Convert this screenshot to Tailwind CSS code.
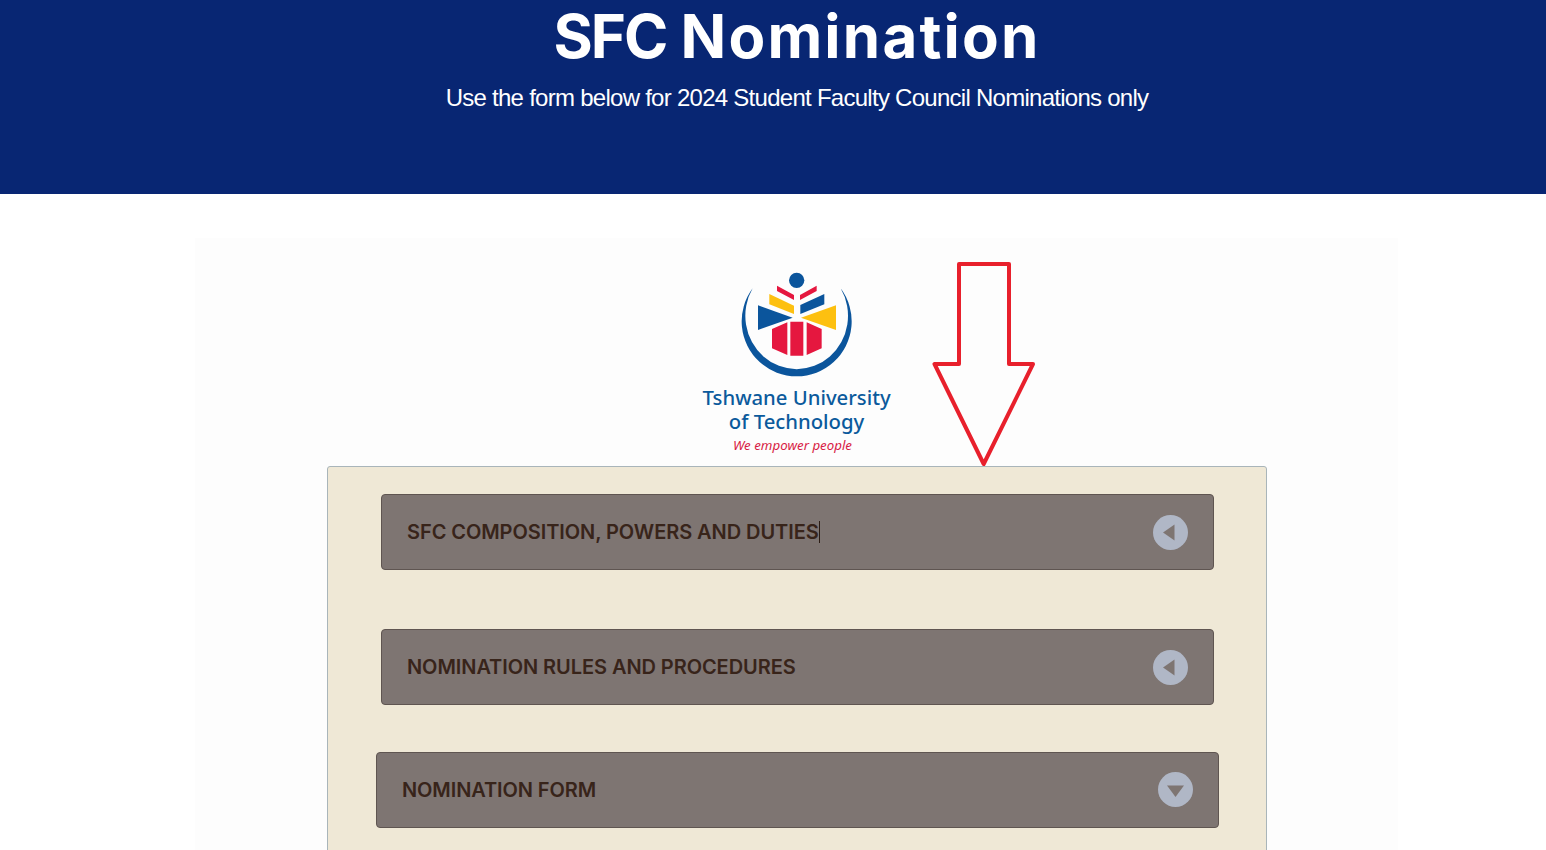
<!doctype html>
<html lang="en">
<head>
<meta charset="utf-8">
<title>SFC Nomination</title>
<script src="https://cdn.jsdelivr.net/npm/@tailwindcss/browser@4"></script>
</head>
<body class="bg-white h-[850px] overflow-hidden font-['Inter',sans-serif]">
<header class="h-[194px] bg-[#082673] pl-[48px] text-white text-center">
  <h1 class="pt-[2px] text-[60px] leading-[68px] font-bold font-['Inter',sans-serif]"><span class="tracking-[-2px]">SFC</span> <span class="tracking-[2.2px]">Nomination</span></h1>
  <p class="mt-[14px] text-[24px] leading-[28px] tracking-[-0.73px] font-['Liberation_Sans',sans-serif]">Use the form below for 2024 Student Faculty Council Nominations only</p>
</header>
<main class="relative mt-[44px] ml-[195px] w-[1203px] h-[612px] bg-[#fdfdfd]">
  <div class="flex flex-col items-center pt-[27px] h-[228px]">
    <svg class="w-[130px] h-[115px] shrink-0 mr-[4px]" viewBox="0 0 390 345" aria-label="Tshwane University of Technology logo">
      <circle cx="200" cy="46" r="23" fill="#0b559c"/>
      <path d="M68 70A165 165 0 1 0 332 70A154 160 0 1 1 68 70Z" fill="#0b559c"/>
      <path d="M141 62L192 90V105L141 78Z M260 62L210 90V105L260 78Z" fill="#e5173f"/>
      <path d="M118 87L192 122V147L118 118Z" fill="#fdc010"/>
      <path d="M283 87L211 120V147L283 118Z" fill="#0b559c"/>
      <path d="M84 121L188 158L84 195Z" fill="#0b559c"/>
      <path d="M318 121L213 158L318 195Z" fill="#fdc010"/>
      <path d="M181 170H220V272H181Z M126 192L172 172V270L126 250Z M275 192L230 172V270L275 250Z" fill="#e5173f"/>
    </svg>
    <div class="mt-[5px] text-center text-[#0b5a9c] text-[20.3px] leading-[24px] font-medium font-['Noto_Sans',sans-serif]">
      <div>Tshwane University</div>
      <div>of Technology</div>
    </div>
    <div class="mt-[2px] pr-[8px] text-[13.3px] leading-[20px] italic text-[#d81c45] font-['Noto_Sans',sans-serif]">We empower people</div>
  </div>
  <svg class="absolute left-[735px] top-[22px] w-[110px] h-[210px]" viewBox="930 260 110 210" fill="none">
    <path d="M959 264H1009V364H1033L983.7 464L934.5 364H959Z" stroke="#e8202c" stroke-width="4" stroke-linejoin="round"/>
  </svg>
  <section class="ml-[132px] w-[940px] h-[390px] bg-[#efe8d6] border border-[#a9b5ba] rounded-t-[3px] pt-[27px]">
    <div class="ml-[53px] w-[833px] h-[76px] flex items-center justify-between pl-[25px] pr-[25px] bg-[#7e7572] border border-[#5f5551] rounded-[4px]">
      <span class="flex items-center text-[20px] font-semibold text-[#38241a] tracking-[-0.07px]">SFC COMPOSITION, POWERS AND DUTIES<span class="w-px h-[22px] bg-[#2b1c14]"></span></span>
      <svg class="w-[35px] h-[35px] shrink-0" viewBox="0 0 35 35"><circle cx="17.5" cy="17.5" r="17.5" fill="#b0b7c6"/><path d="M10 17.5L21.5 9.5V25.5Z" fill="#7e7572"/></svg>
    </div>
    <div class="ml-[53px] mt-[59px] w-[833px] h-[76px] flex items-center justify-between pl-[25px] pr-[25px] bg-[#7e7572] border border-[#5f5551] rounded-[4px]">
      <span class="text-[20px] font-semibold text-[#38241a] tracking-[-0.07px]">NOMINATION RULES AND PROCEDURES</span>
      <svg class="w-[35px] h-[35px] shrink-0" viewBox="0 0 35 35"><circle cx="17.5" cy="17.5" r="17.5" fill="#b0b7c6"/><path d="M10 17.5L21.5 9.5V25.5Z" fill="#7e7572"/></svg>
    </div>
    <div class="ml-[48px] mt-[47px] w-[843px] h-[76px] flex items-center justify-between pl-[25px] pr-[25px] bg-[#7e7572] border border-[#5f5551] rounded-[4px]">
      <span class="text-[20px] font-semibold text-[#38241a] tracking-[-0.1px]">NOMINATION FORM</span>
      <svg class="w-[35px] h-[35px] shrink-0 -mt-[2px]" viewBox="0 0 35 35"><circle cx="17.5" cy="17.5" r="17.5" fill="#b0b7c6"/><path d="M9 13.5H26L17.5 25Z" fill="#7e7572"/></svg>
    </div>
  </section>
</main>
</body>
</html>
